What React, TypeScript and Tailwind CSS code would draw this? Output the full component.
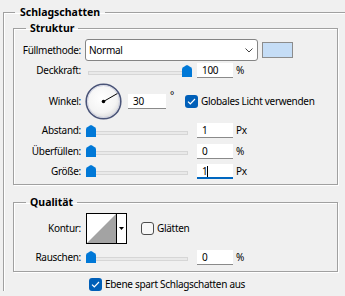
import type { ReactNode } from 'react';

function Thumb({ left }: { left: number }) {
  return (
    <svg
      className="absolute top-0"
      style={{ left }}
      width="10"
      height="12"
      viewBox="0 0 10 12"
    >
      <path d="M0 4.2 Q0 3 1.2 2.2 L4 0.4 Q5 -0.2 6 0.4 L8.8 2.2 Q10 3 10 4.2 V12 H0 Z" fill="#0078d7" />
    </svg>
  );
}

function Slider({ value }: { value: number }) {
  return (
    <div className="relative ml-[5px] h-[12px] w-[107px] shrink-0">
      <div className="absolute left-[2px] top-[6px] h-[4px] w-[100px] border border-[#d6d6d6] bg-[#e9e9e9]" />
      <Thumb left={Math.round(value * 0.96)} />
    </div>
  );
}

function Field({ value, focused = false, width = 'w-[36px]' }: { value: string; focused?: boolean; width?: string }) {
  return (
    <div
      className={
        'relative h-[15px] shrink-0 bg-white pl-[5px] leading-[15px] ' +
        width +
        (focused ? ' border-b-2 border-[#0067c0]' : ' border-b border-[#8a8a8a]')
      }
    >
      {value}
      {focused && <span className="inline-block h-[11px] w-px translate-y-[2px] bg-black align-top" />}
    </div>
  );
}

function Check({ checked }: { checked: boolean }) {
  if (!checked) {
    return <div className="h-[13px] w-[13px] shrink-0 rounded-[3px] border border-[#4d4d4d] bg-[#f7f7f7]" />;
  }
  return (
    <div className="flex h-[13px] w-[13px] shrink-0 items-center justify-center rounded-[3px] bg-[#005fb8]">
      <svg width="9" height="7" viewBox="0 0 9 7">
        <path d="M1 3.6 L3.3 5.8 L8 1" stroke="#fff" strokeWidth="1.2" fill="none" />
      </svg>
    </div>
  );
}

function Label({ children }: { children: ReactNode }) {
  return <div className="w-[67px] shrink-0 text-right">{children}</div>;
}

function SliderRow({ label, value, unit, pos, focused = false, h }: { label: string; value: string; unit: string; pos: number; focused?: boolean; h: string }) {
  return (
    <div className={'flex items-center ' + h}>
      <Label>{label}</Label>
      <Slider value={pos} />
      <div className="ml-[4px]">
        <Field value={value} focused={focused} />
      </div>
      <div className="ml-[3px]">{unit}</div>
    </div>
  );
}

function Group({ title, className, children }: { title: string; className: string; children: ReactNode }) {
  return (
    <fieldset
      className={
        'border border-[#a0a0a0] shadow-[1px_1px_0_#fff,inset_1px_1px_0_#fff] ' + className
      }
    >
      <legend className="ml-[12px] px-[4px] text-[10.5px] font-bold leading-[14px] tracking-normal">{title}</legend>
      {children}
    </fieldset>
  );
}

function Dial() {
  return (
    <svg width="37" height="37" viewBox="0 0 37 37" className="ml-[4px] shrink-0">
      <defs>
        <radialGradient id="dialFill" cx="45%" cy="40%" r="60%">
          <stop offset="0%" stopColor="#ffffff" />
          <stop offset="70%" stopColor="#f4f4f4" />
          <stop offset="100%" stopColor="#dcdcdc" />
        </radialGradient>
      </defs>
      <circle cx="18.5" cy="18.5" r="17.3" fill="url(#dialFill)" stroke="#4a5478" strokeWidth="1.6" />
      <circle cx="18.5" cy="18.5" r="16" fill="none" stroke="#c9cde0" strokeWidth="0.8" />
      <line x1="18.5" y1="18.5" x2="32.4" y2="10.5" stroke="#000" strokeWidth="1" />
      <circle cx="18.5" cy="18.5" r="1.8" fill="#000" />
    </svg>
  );
}

function ContourPicker() {
  return (
    <div className="ml-[5px] flex h-[31px] w-[41px] shrink-0 border border-black bg-white">
      <svg width="29" height="29" viewBox="0 0 29 29" className="shrink-0">
        <path d="M0 29 L29 0 V29 Z" fill="#a3a3a3" />
      </svg>
      <div className="flex flex-1 items-center justify-center border-l border-black">
        <svg width="5" height="3" viewBox="0 0 5 3">
          <path d="M0 0 H5 L2.5 3 Z" fill="#000" />
        </svg>
      </div>
    </div>
  );
}

export default function App() {
  return (
    <div className="h-[296px] w-[345px] overflow-hidden bg-[#f0f0f0] pt-[5px] font-['Noto_Sans',sans-serif] text-[10px] tracking-[-0.3px] text-black">
      <fieldset className="ml-[3px] w-[400px] border-l border-t border-[#a0a0a0] shadow-[inset_1px_1px_0_#fff]">
        <legend className="ml-[11px] px-[5px] text-[10.5px] font-bold leading-[14px] tracking-normal">Schlagschatten</legend>

        <Group title="Struktur" className="ml-[9px] mt-[2px] w-[325px] pb-[3px]">
          {/* Füllmethode */}
          <div className="mt-[4px] flex h-[22px] items-center">
            <Label>Füllmethode:</Label>
            <div className="ml-[4px] flex h-[22px] w-[173px] shrink-0 items-center justify-between rounded-[3px] border border-[#858585] bg-white pl-[3px] pr-[4px]">
              <span>Normal</span>
              <svg width="8" height="5" viewBox="0 0 8 5">
                <path d="M0.5 0.5 L4 4 L7.5 0.5" stroke="#444" strokeWidth="1" fill="none" />
              </svg>
            </div>
            <div className="ml-[4px] h-[16px] w-[31px] shrink-0 border border-[#8c8c8c] bg-[#c5ddf6]" />
          </div>

          <SliderRow h="h-[19px]" label="Deckkraft:" value="100" unit="%" pos={100} />

          {/* Winkel */}
          <div className="mt-[2px] flex h-[38px] items-center">
            <Label>Winkel:</Label>
            <Dial />
            <div className="ml-[6px]">
              <Field value="30" width="w-[38px]" />
            </div>
            <div className="ml-[4px] self-start pt-[6px]">°</div>
            <div className="ml-[11px]">
              <Check checked />
            </div>
            <div className="ml-[3px]">Globales Licht verwenden</div>
          </div>

          <SliderRow h="h-[21px]" label="Abstand:" value="1" unit="Px" pos={0} />
          <SliderRow h="h-[20px]" label="Überfüllen:" value="0" unit="%" pos={0} />
          <SliderRow h="h-[20px]" label="Größe:" value="1" unit="Px" pos={0} focused />
        </Group>

        <Group title="Qualität" className="ml-[9px] mt-[10px] w-[325px] pb-[1px]">
          <div className="mt-[4px] flex h-[31px] items-center">
            <Label>Kontur:</Label>
            <ContourPicker />
            <div className="ml-[14px]">
              <Check checked={false} />
            </div>
            <div className="ml-[3px]">Glätten</div>
          </div>
          <SliderRow h="h-[26px]" label="Rauschen:" value="0" unit="%" pos={0} />
        </Group>

        <div className="mt-[5px] flex h-[14px] items-center pl-[85px]">
          <Check checked />
          <div className="ml-[3px]">Ebene spart Schlagschatten aus</div>
        </div>
      </fieldset>
    </div>
  );
}
